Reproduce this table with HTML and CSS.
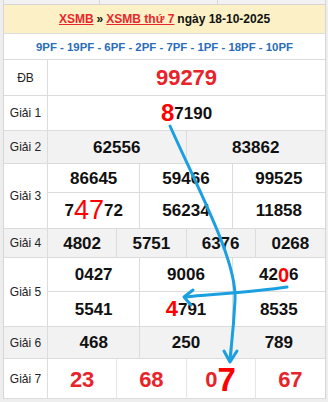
FILE: index.html
```html
<!DOCTYPE html>
<html lang="vi">
<head>
<meta charset="utf-8">
<link rel="stylesheet" href="styles.css">
</head>
<body>
<div class="wrap">
  <div class="topstrip"><span></span><span></span><span></span></div>
  <div class="head"><a href="#">XSMB</a> » <a href="#">XSMB thứ 7</a> ngày 18-10-2025</div>
  <div class="pf">9PF - 19PF - 6PF - 2PF - 7PF - 1PF - 18PF - 10PF</div>

  <div class="prize h35">
    <div class="lab">ĐB</div>
    <div class="cells c1"><div class="cell db">99279</div></div>
  </div>
  <div class="prize h34">
    <div class="lab">Giải 1</div>
    <div class="cells c1"><div class="cell"><b class="hl g1">8</b>7190</div></div>
  </div>
  <div class="prize grey h32">
    <div class="lab">Giải 2</div>
    <div class="cells c2"><div class="cell">62556</div><div class="cell">83862</div></div>
  </div>
  <div class="prize">
    <div class="lab">Giải 3</div>
    <div class="cells c3 r3">
      <div class="cell">86645</div><div class="cell">59466</div><div class="cell">99525</div>
      <div class="cell">7<b class="hl g3">47</b>72</div><div class="cell">56234</div><div class="cell">11858</div>
    </div>
  </div>
  <div class="prize grey h28">
    <div class="lab">Giải 4</div>
    <div class="cells c4"><div class="cell">4802</div><div class="cell">5751</div><div class="cell">6376</div><div class="cell">0268</div></div>
  </div>
  <div class="prize">
    <div class="lab">Giải 5</div>
    <div class="cells c3 r5">
      <div class="cell">0427</div><div class="cell">9006</div><div class="cell">42<b class="hl g5a">0</b>6</div>
      <div class="cell">5541</div><div class="cell"><b class="hl g5b">4</b>791</div><div class="cell">8535</div>
    </div>
  </div>
  <div class="prize grey h31">
    <div class="lab">Giải 6</div>
    <div class="cells c3"><div class="cell">468</div><div class="cell">250</div><div class="cell">789</div></div>
  </div>
  <div class="prize h39">
    <div class="lab">Giải 7</div>
    <div class="cells c4 g7row"><div class="cell g7">23</div><div class="cell g7">68</div><div class="cell g7">0<b class="hl g7b">7</b></div><div class="cell g7">67</div></div>
  </div>

  <svg class="arrows" width="328" height="402" viewBox="0 0 328 402">
    <g fill="none" stroke="#1a9fe0" stroke-width="3" stroke-linecap="round" stroke-linejoin="round">
      <path d="M169,126 C200,195 236,262 234,300 S230,345 229,361"/>
      <path d="M223,351 L229,362 L236,351"/>
      <path d="M286,287 C260,291 230,293 184,297"/>
      <path d="M192,290 L183,297 L190,305"/>
    </g>
  </svg>
</div>
</body>
</html>
```

FILE: styles.css
```css
html, body {
  margin: 0;
  padding: 0;
}
body {
  background: #eeeeee;
  font-family: "Liberation Sans", Arial, sans-serif;
  width: 328px;
  height: 402px;
  overflow: hidden;
}
.wrap {
  position: relative;
  margin: 0 2px 0 3px;
  border-left: 1px solid #d6d6d6;
  border-right: 1px solid #d6d6d6;
  background: #fff;
}
.topstrip {
  height: 4px;
  display: grid;
  grid-template-columns: 96px 118px 1fr;
  background: #f2f2f2;
  border-bottom: 1px solid #d6d6d6;
}
.topstrip span {
  border-right: 1px solid #d6d6d6;
}
.topstrip span:last-child {
  border-right: 0;
}
.head {
  height: 28px;
  background: #fcf1c6;
  border-bottom: 1px solid #dcdcdc;
  display: flex;
  align-items: center;
  justify-content: center;
  font-size: 12px;
  font-weight: bold;
  color: #111;
  white-space: nowrap;
}
.head a {
  color: #e8262b;
  text-decoration: underline;
  margin: 0 3px;
}
.head a:first-child {
  margin-left: 0;
}
.pf {
  height: 25px;
  border-bottom: 1px solid #dcdcdc;
  display: flex;
  align-items: center;
  justify-content: center;
  font-size: 11.4px;
  font-weight: bold;
  color: #2a6db8;
  white-space: nowrap;
}
.prize {
  display: grid;
  grid-template-columns: 44px 1fr;
  border-bottom: 1px solid #dcdcdc;
}
.prize.grey {
  background: #f2f2f2;
}
.h35 { height: 35px; }
.h34 { height: 34px; }
.h32 { height: 32px; }
.h28 { height: 28px; }
.h31 { height: 31px; }
.h39 { height: 39px; }
.lab {
  border-right: 1px solid #dcdcdc;
  display: flex;
  align-items: center;
  justify-content: center;
  font-size: 12px;
  color: #222;
}
.cells {
  display: grid;
}
.c1 { grid-template-columns: 1fr; }
.c2 { grid-template-columns: 1fr 1fr; }
.c3 { grid-template-columns: 1fr 1fr 1fr; }
.c4 { grid-template-columns: 1fr 1fr 1fr 1fr; }
.r3 { grid-template-rows: 29px 35px; }
.r5 { grid-template-rows: 34px 34px; }
.cell {
  display: flex;
  align-items: center;
  justify-content: center;
  font-size: 17px;
  font-weight: bold;
  color: #111;
  border-right: 1px solid #dcdcdc;
  line-height: 1;
  white-space: nowrap;
}
.cell:last-child,
.c2 .cell:nth-child(2n),
.c3 .cell:nth-child(3n),
.c4 .cell:nth-child(4n),
.c1 .cell {
  border-right: 0;
}
.r3 .cell:nth-child(-n+3),
.r5 .cell:nth-child(-n+3) {
  border-bottom: 1px solid #dcdcdc;
}
.cell.db {
  font-size: 22px;
  color: #e8232a;
}
.g7row .cell {
  border-right-color: #e6e6e6;
}
.cell.g7 {
  font-size: 22px;
  color: #e8232a;
  padding-top: 2px;
}
.hl {
  color: #ff0000;
  font-weight: bold;
}
.g1 { font-size: 24px; }
.g3 { font-size: 27px; font-weight: normal; }
.g5a { font-size: 20px; }
.g5b { font-size: 22px; }
.g7b { font-size: 33px; }
.arrows {
  position: absolute;
  left: -3px;
  top: 0;
  pointer-events: none;
}
```
